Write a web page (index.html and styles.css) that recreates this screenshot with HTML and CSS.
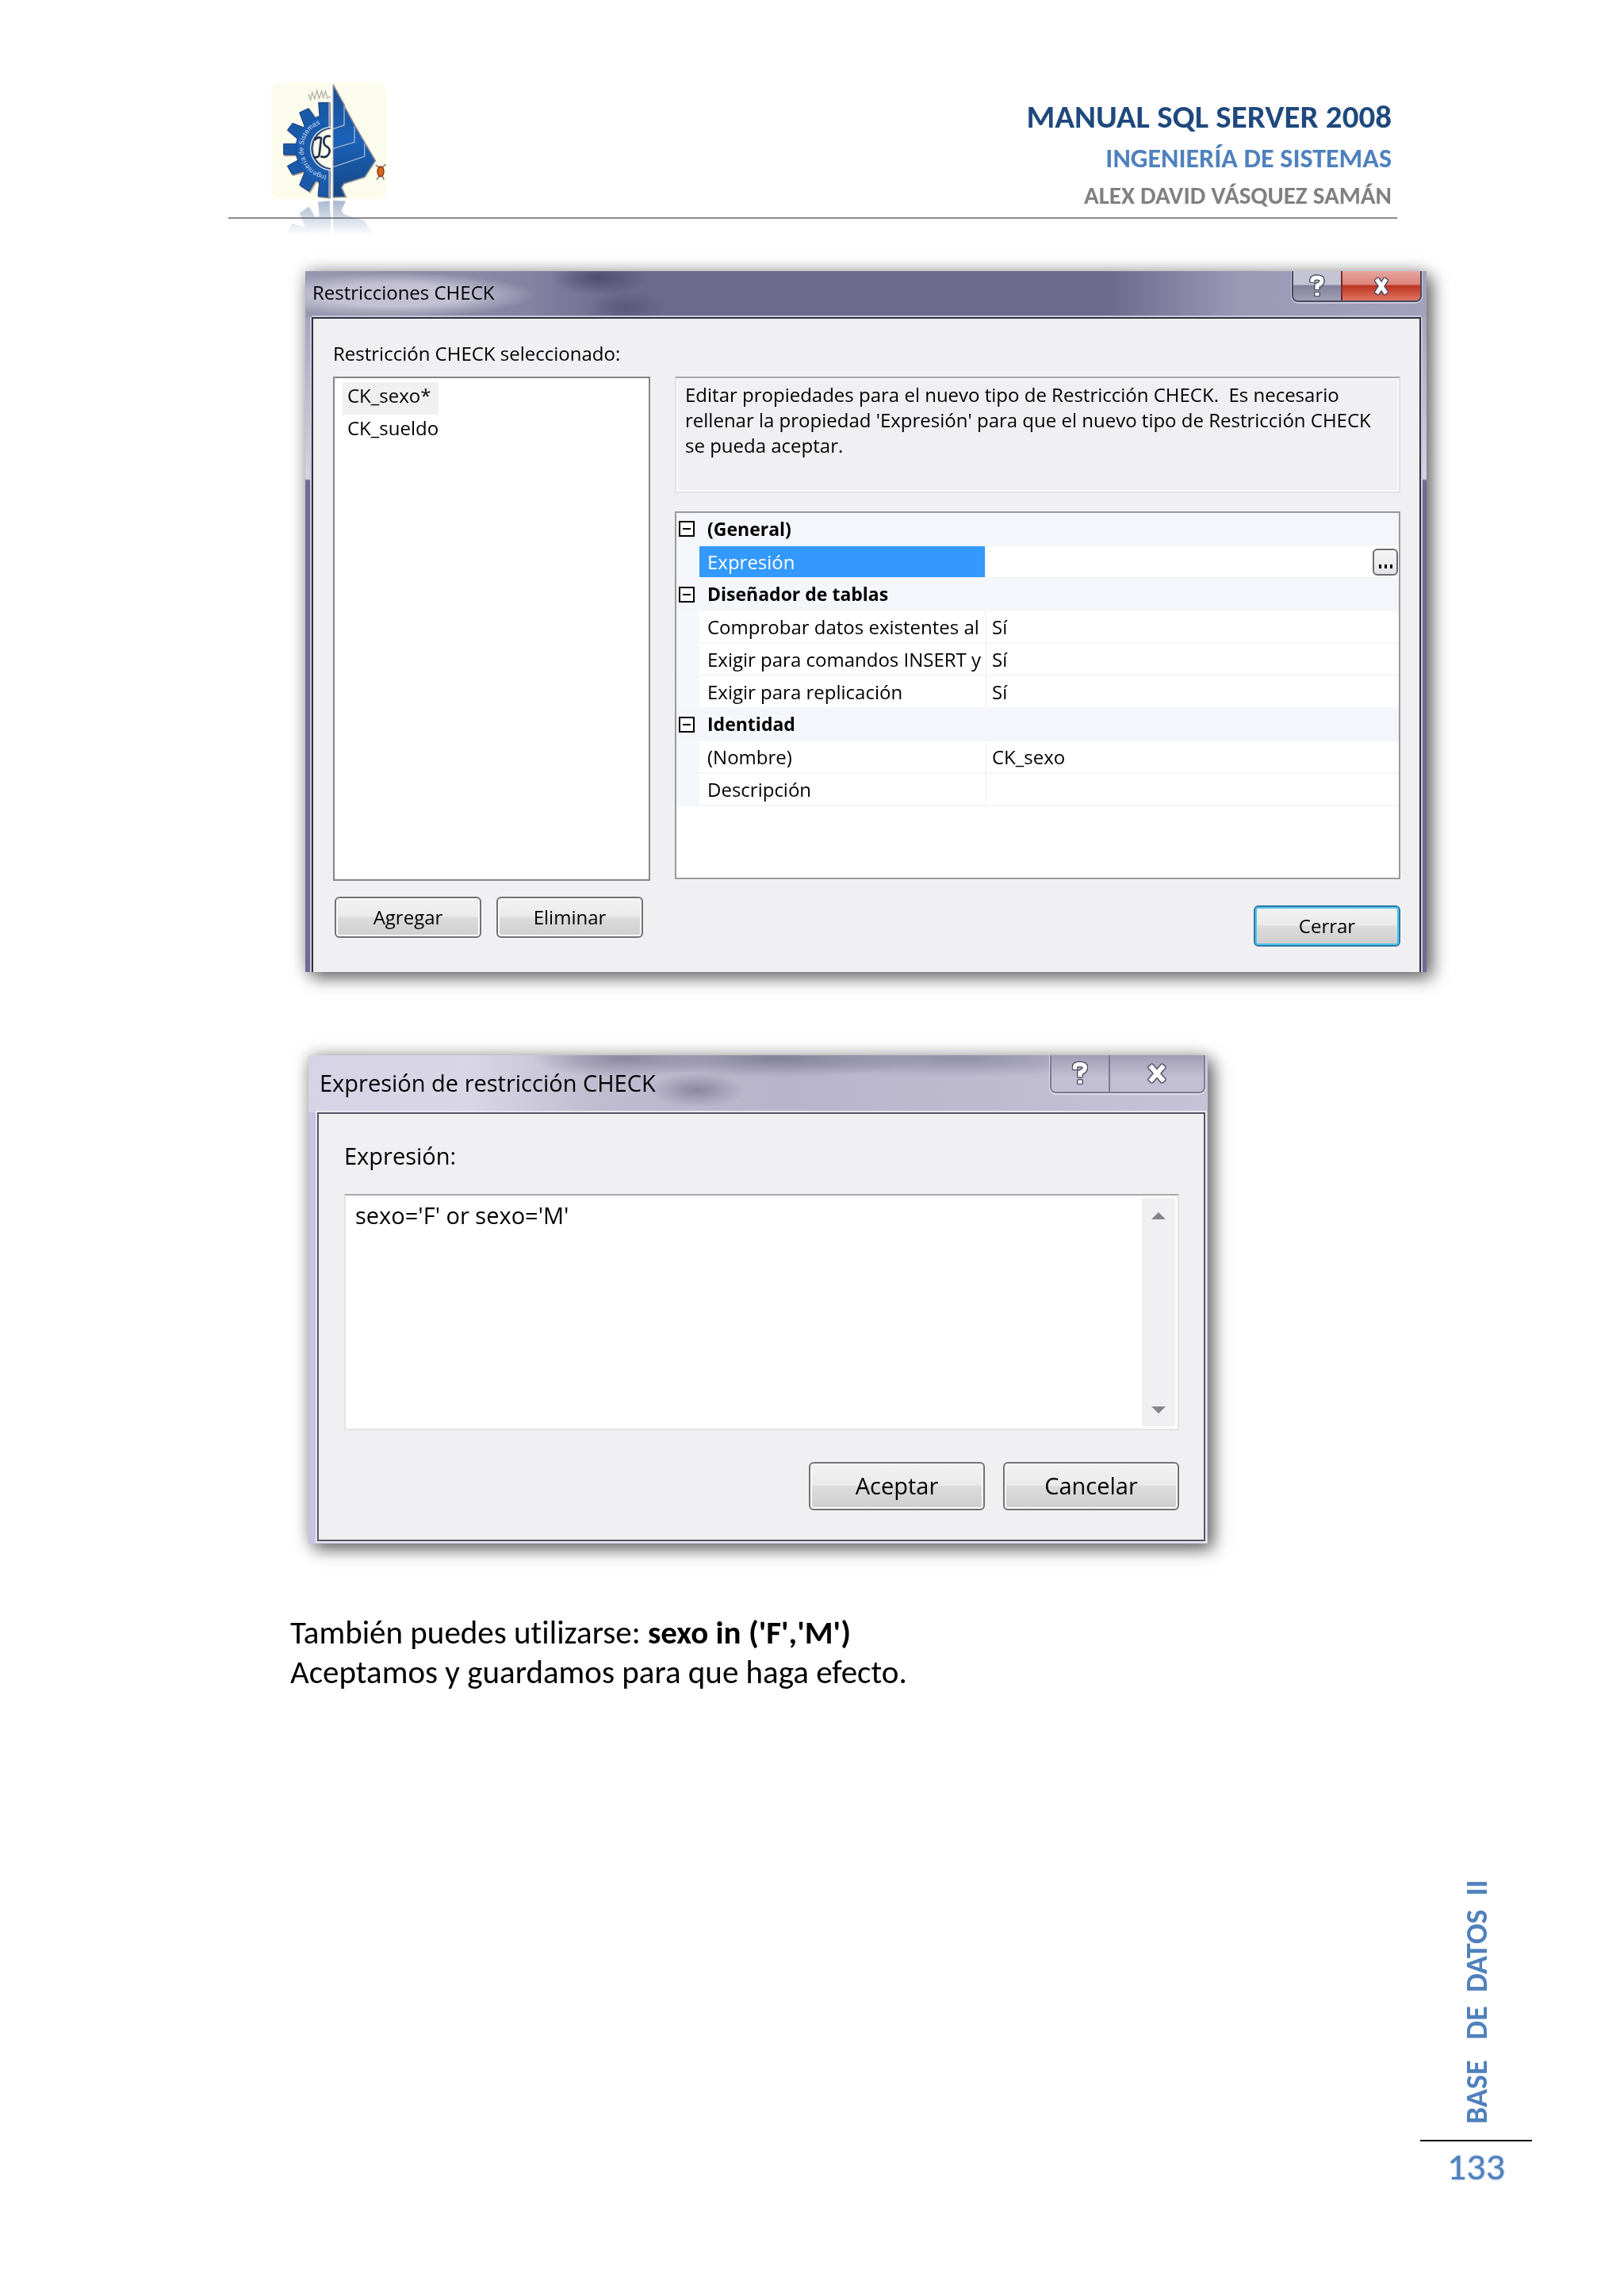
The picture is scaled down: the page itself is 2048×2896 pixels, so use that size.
FILE: index.html
```html
<!DOCTYPE html>
<html lang="es">
<head>
  <meta charset="UTF-8">
  <meta name="viewport" content="width=device-width, initial-scale=1.0">
  <title>Manual SQL Server 2008</title>
  <link rel="stylesheet" href="styles.css">
</head>
<body>
  <header>
    <svg class="logo" viewBox="180 69 450 588" role="img" aria-label="Ingeniería de Sistemas">
      <defs>
        <linearGradient id="azul" x1="0" y1="0" x2="0" y2="1">
          <stop offset="0" stop-color="#1a4f96"/>
          <stop offset="0.5" stop-color="#1a62b8"/>
          <stop offset="1" stop-color="#164684"/>
        </linearGradient>
        <linearGradient id="desvanecer" gradientUnits="userSpaceOnUse" x1="0" y1="515" x2="0" y2="650">
          <stop offset="0" stop-color="#fff" stop-opacity="0.5"/>
          <stop offset="0.5" stop-color="#fff" stop-opacity="0.25"/>
          <stop offset="1" stop-color="#fff" stop-opacity="0"/>
        </linearGradient>
        <mask id="mascara" maskUnits="userSpaceOnUse" x="180" y="515" width="450" height="142">
          <rect x="180" y="515" width="450" height="142" fill="url(#desvanecer)"/>
        </mask>
        <clipPath id="mitad"><rect x="180" y="69" width="228" height="450"/></clipPath>
        <path id="arco" d="M392 424 A102 102 0 0 1 392 222"/>
        <g id="engranaje">
          <circle cx="408" cy="324" r="132"/>
          <path d="M362 148 L405 148 L405 240 L366 200 Z M290 186 L324 170 L352 210 L310 240 Z M244 252 L264 226 L310 244 L284 286 Z M230 304 L278 304 L278 345 L230 345 Z M244 388 L284 366 L310 406 L262 420 Z M290 460 L310 410 L352 440 L326 484 Z M360 502 L366 440 L405 410 L405 506 Z"/>
        </g>
        <path id="vela" d="M417 80 L459 156 L462 166 L500 236 L538 302 L577 368 L537 430 L458 455 L449 470 L465 505 L417 507 Z"/>
      </defs>
      <rect x="183" y="73" width="436" height="440" rx="34" fill="#fbfcec"/>
      <g clip-path="url(#mitad)">
        <use href="#engranaje" fill="#8f8b8b" stroke="#a9a5a3" stroke-width="5" transform="translate(4 4)"/>
        <use href="#engranaje" fill="#1a59a8" stroke="#1c3f78" stroke-width="3"/>
        <circle cx="408" cy="324" r="131" fill="#1a5cae"/>
        <path d="M403 148 V506" stroke="#b9b5b3" stroke-width="6"/>
        <circle cx="414" cy="322" r="84" fill="#e9eef5"/>
        <circle cx="414" cy="322" r="80" fill="#24436f"/>
        <circle cx="416" cy="322" r="74" fill="#fbfcec" stroke="#c8cbd0" stroke-width="3"/>
      </g>
      <text class="logo-arco"><textPath href="#arco">Ingeniería de Sistemas</textPath></text>
      <path d="M348 290 q10 -14 24 -8 q-4 40 -8 68 q-8 8 -18 4 M408 276 q-26 -6 -26 20 q0 14 14 20 q14 10 4 28 q-10 16 -30 8" fill="none" stroke="#20304f" stroke-width="8"/>
      <path d="M324 116 l8 22 l6 -28 l10 24 l8 -32 l8 30 l10 -28 l6 26 l8 -24 l8 26 l12 -8" fill="none" stroke="#b3b2a8" stroke-width="4"/>
      <use href="#vela" fill="url(#azul)" stroke="#8d8b90" stroke-width="5"/>
      <path d="M459 160 V234 L417 248 M498 238 V298 L417 322 M536 304 V352 L417 392" fill="none" stroke="#a9b7ca" stroke-width="4"/>
      <path d="M412 76 V512" stroke="#fff" stroke-width="7"/>
      <path d="M578 384 l14 10 M616 382 l-12 12 M582 440 l12 -16 M610 440 l-8 -16" stroke="#6b6552" stroke-width="4"/>
      <ellipse cx="597" cy="409" rx="12" ry="19" fill="#d4691d" stroke="#8b2f14" stroke-width="4"/>
      <g mask="url(#mascara)">
        <g transform="translate(0 1026) scale(1 -1)" fill="#4c6899">
          <g clip-path="url(#mitad)"><use href="#engranaje"/></g>
          <use href="#vela"/>
        </g>
      </g>
    </svg>
    <div class="titulos">
      <h1>MANUAL SQL SERVER 2008</h1>
      <h2>INGENIERÍA DE SISTEMAS</h2>
      <p>ALEX DAVID VÁSQUEZ SAMÁN</p>
    </div>
  </header>

  <main>
    <section class="ventana restricciones">
      <div class="barra">
        <span>Restricciones CHECK</span>
        <div class="controles">
          <button class="ayuda" aria-label="Ayuda">
            <svg width="24" height="32" viewBox="0 0 24 32"><path d="M6 11 V8 Q6 5 12 5 Q18 5 18 9 Q18 13 12 15 V20 M12 24 V28"/></svg>
          </button>
          <button class="cerrar" aria-label="Cerrar ventana">
            <svg width="28" height="26" viewBox="0 0 28 26"><path d="M8 4 L20 22 M20 4 L8 22"/></svg>
          </button>
        </div>
      </div>
      <div class="cliente">
        <label for="lista">Restricción CHECK seleccionado:</label>
        <div class="columnas">
          <div class="izquierda">
            <select id="lista" size="2">
              <option class="actual">CK_sexo*</option>
              <option>CK_sueldo</option>
            </select>
            <div class="botones">
              <button class="boton">Agregar</button>
              <button class="boton">Eliminar</button>
            </div>
          </div>
          <div class="derecha">
            <p class="info">Editar propiedades para el nuevo tipo de Restricción CHECK.&nbsp; Es necesario rellenar la propiedad 'Expresión' para que el nuevo tipo de Restricción CHECK se pueda aceptar.</p>
            <div class="propiedades">
              <table>
                <colgroup><col class="col-margen"><col class="col-nombre"><col></colgroup>
                <tr class="categoria"><td><button class="plegar" aria-label="Contraer General"></button></td><th colspan="2">(General)</th></tr>
                <tr class="elegida"><td></td><td>Expresión</td><td><button class="puntos" aria-label="Editar expresión"><i></i><i></i><i></i></button></td></tr>
                <tr class="categoria"><td><button class="plegar" aria-label="Contraer Diseñador de tablas"></button></td><th colspan="2">Diseñador de tablas</th></tr>
                <tr><td></td><td>Comprobar datos existentes al</td><td>Sí</td></tr>
                <tr><td></td><td>Exigir para comandos INSERT y</td><td>Sí</td></tr>
                <tr><td></td><td>Exigir para replicación</td><td>Sí</td></tr>
                <tr class="categoria"><td><button class="plegar" aria-label="Contraer Identidad"></button></td><th colspan="2">Identidad</th></tr>
                <tr><td></td><td>(Nombre)</td><td>CK_sexo</td></tr>
                <tr><td></td><td>Descripción</td><td></td></tr>
              </table>
            </div>
            <button class="boton principal">Cerrar</button>
          </div>
        </div>
      </div>
    </section>

    <section class="ventana expresion">
      <div class="barra">
        <span>Expresión de restricción CHECK</span>
        <div class="controles">
          <button class="ayuda" aria-label="Ayuda">
            <svg width="26" height="34" viewBox="0 0 24 32"><path d="M6 11 V8 Q6 5 12 5 Q18 5 18 9 Q18 13 12 15 V20 M12 24 V28"/></svg>
          </button>
          <button class="cerrar" aria-label="Cerrar ventana">
            <svg width="34" height="32" viewBox="0 0 28 26"><path d="M7 5 L21 21 M21 5 L7 21"/></svg>
          </button>
        </div>
      </div>
      <div class="cliente">
        <label for="texto">Expresión:</label>
        <div class="caja">
          <textarea id="texto">sexo='F' or sexo='M'</textarea>
          <div class="desplazar">
            <svg width="18" height="9" viewBox="0 0 18 9"><path d="M0 9 L9 0 L18 9 Z"/></svg>
            <svg width="18" height="9" viewBox="0 0 18 9"><path d="M0 0 L9 9 L18 0 Z"/></svg>
          </div>
        </div>
        <div class="botones">
          <button class="boton">Aceptar</button>
          <button class="boton">Cancelar</button>
        </div>
      </div>
    </section>

    <p class="texto">También puedes utilizarse: <b>sexo in ('F','M')</b><br>Aceptamos y guardamos para que haga efecto.</p>
  </main>

  <footer>
    <span class="materia">BASE   DE  DATOS  II</span>
    <span class="pagina">133</span>
  </footer>
</body>
</html>
```
FILE: styles.css
```css
* {
  box-sizing: border-box;
  margin: 0;
}

body {
  display: flex;
  flex-direction: column;
  min-height: 100vh;
  background-color: white;
  color: black;
  font-family: Calibri, Carlito, Lato, sans-serif;
  font-size: 41px;
  font-variant-ligatures: none;
}

header {
  display: flex;
  justify-content: space-between;
  margin: 0 286px 0 288px;
  padding: 103px 7px 0 53px;
  border-bottom: 2px solid #8b8b90;
}

.logo {
  width: 150px;
  height: 196px;
  margin-bottom: -25px;
}
.logo-arco {
  font-family: "Liberation Sans", sans-serif;
  font-size: 26px;
  fill: #c9daf0;
}

.titulos {
  margin-top: 16px;
  text-align: right;
  font-weight: bold;
}
.titulos h1 {
  font-size: 41px;
  line-height: 56px;
  color: #1f497d;
}
.titulos h2 {
  font-size: 34px;
  line-height: 50px;
  color: #4f81bd;
}
.titulos p {
  font-size: 31px;
  line-height: 42px;
  color: #808080;
}

main {
  padding: 66px 248px 0 366px;
}

/* ventanas */
.ventana {
  font-family: "Open Sans", "Noto Sans", sans-serif;
  font-size: 24px;
  box-shadow: 8px 8px 20px rgba(0, 0, 0, .5), 0 0 20px rgba(0, 0, 0, .3);
}
.ventana button, .ventana select, .ventana textarea {
  font: inherit;
  color: inherit;
}
.barra {
  display: flex;
  justify-content: space-between;
  align-items: center;
}
.controles {
  display: flex;
  align-self: flex-start;
  border: 2px solid #4a4962;
  border-top: none;
  border-radius: 0 0 8px 8px;
  box-shadow: 0 1px 0 1px #c9c8da;
  overflow: hidden;
}
.controles button {
  display: flex;
  align-items: center;
  justify-content: center;
  padding: 0;
  border: none;
}
.controles path {
  fill: none;
  stroke: white;
  stroke-width: 5;
}
.controles svg {
  filter: drop-shadow(1px 0 0 #4b4a60) drop-shadow(-1px 0 0 #4b4a60) drop-shadow(0 1px 0 #4b4a60) drop-shadow(0 -1px 0 #4b4a60);
}
.cliente {
  background-color: #f0eff1;
  border: 2px solid #32313f;
}
.cliente label {
  display: block;
  line-height: 40px;
}
.botones {
  display: flex;
}
.boton {
  width: 185px;
  height: 52px;
  padding: 0 0 2px;
  border: 2px solid #737373;
  border-radius: 6px;
  box-shadow: inset 0 0 0 2px #fafafa;
  background: linear-gradient(#f2f2f2 0%, #eaeaeb 48%, #dcdcdd 50%, #cecece 100%);
}
.boton.principal {
  align-self: flex-end;
  margin-top: 33px;
  border-color: #3378a6;
  box-shadow: inset 0 0 0 2px #4cc6ea;
}

/* Restricciones CHECK */
.restricciones {
  max-width: 1414px;
  margin-left: 19px;
  padding: 0 7px 0 8px;
  background: linear-gradient(#9a99b6 0, #d4d3e2 262px, #6f6b93 264px);
}
.restricciones .barra {
  height: 58px;
  margin: 0 -7px 0 -8px;
  padding: 0 6px 5px 9px;
  background:
    radial-gradient(ellipse 60px 22px at 370px 8px, #4f4d70, transparent),
    radial-gradient(ellipse 50px 20px at 405px 46px, #5a587b, transparent),
    radial-gradient(ellipse 180px 28px at 110px 30px, #c3c1d2 50%, rgba(195, 193, 210, 0)),
    linear-gradient(90deg, #9997b0 0, #8583a2 280px, #6b6a8c 400px, #6b6a8c 1010px, #9a99b6 1180px, #a3a2bc 100%);
}
.restricciones .ayuda {
  width: 60px;
  height: 37px;
  background: linear-gradient(#c5c4d2 45%, #84839b 50%, #a09fb6 100%);
}
.restricciones .cerrar {
  width: 100px;
  height: 37px;
  border-left: 2px solid #7b2a2c;
  background: linear-gradient(#e7a59f 0%, #dd8378 45%, #bd3421 50%, #df7561 100%);
}
.restricciones .cliente {
  padding: 24px 24px 32px 25px;
  border-bottom: none;
  box-shadow: 0 -2px 0 #c9c8da, 2px 0 0 #c9c8da, -2px 0 0 #c9c8da;
}
.columnas {
  display: grid;
  grid-template-columns: 400px 1fr;
  gap: 31px;
  margin-top: 9px;
}
.izquierda, .derecha {
  display: flex;
  flex-direction: column;
}
#lista {
  width: 100%;
  height: 636px;
  padding: 5px 10px;
  border: 2px solid #85858a;
  border-radius: 0;
  background-color: white;
  outline: none;
}
#lista option {
  width: max-content;
  padding: 0 6px;
  min-height: 41px;
  line-height: 41px;
}
#lista .actual {
  padding-right: 10px;
  background-color: #f0f0f1;
}
.izquierda .botones {
  gap: 19px;
  margin: 20px 0 0 2px;
}
.info {
  height: 147px;
  padding: 5px 11px;
  line-height: 32px;
  border: 2px solid #e3e3e6;
  border-top-color: #a5a5a8;
  box-shadow: inset 0 0 0 2px #fafafa;
}
.propiedades {
  height: 464px;
  margin-top: 23px;
  border: 2px solid #9a9a9e;
  background-color: white;
}
table {
  width: 100%;
  table-layout: fixed;
  border-collapse: collapse;
}
.col-margen {
  width: 29px;
}
.col-nombre {
  width: 361px;
}
tr {
  height: 41px;
}
td, th {
  height: 41px;
  padding: 0 0 0 10px;
  border-bottom: 2px solid #f6f6f9;
  line-height: 39px;
  text-align: left;
  white-space: nowrap;
  overflow: hidden;
}
td:first-child {
  padding: 0 0 0 3px;
  background-color: #f4f7fc;
}
td:nth-child(3) {
  padding: 0 1px 0 7px;
  border-left: 2px solid #f6f6f9;
}
th {
  font-size: 23px;
}
.categoria th, .categoria td {
  background-color: #f4f6fb;
}
.elegida td:nth-child(2) {
  background-color: #3399ff;
  color: white;
}
.plegar {
  display: block;
  width: 20px;
  height: 20px;
  padding: 0 3px;
  border: 2px solid black;
  background: linear-gradient(black, black) center / 10px 2px no-repeat white;
}
.puntos {
  display: flex;
  justify-content: center;
  align-items: flex-end;
  gap: 4px;
  width: 32px;
  height: 34px;
  margin-left: auto;
  padding: 0 0 7px;
  border: 2px solid #6d6d70;
  border-radius: 6px;
  background: linear-gradient(#f6f6f6, #e4e4e6);
}
.puntos i {
  width: 3px;
  height: 5px;
  background-color: black;
}

/* Expresión de restricción CHECK */
.expresion {
  max-width: 1134px;
  margin: 105px 0 0 23px;
  padding: 0 3px 3px 11px;
  background-color: #c8c4df;
  font-size: 29px;
}
.expresion .barra {
  height: 72px;
  margin: 0 -3px 0 -11px;
  padding: 0 3px 4px 14px;
  background:
    radial-gradient(ellipse 60px 22px at 490px 44px, #8a87a0, transparent),
    radial-gradient(ellipse 120px 24px at 400px 4px, #8a87a0, transparent),
    radial-gradient(ellipse 190px 24px at 590px 4px, #827f99, transparent),
    radial-gradient(ellipse 230px 24px at 820px 4px, #918ea8, transparent),
    linear-gradient(90deg, #d6d3e6 0, #d9d7e5 200px, #c0bdd1 360px, #b7b4cb 600px, #c6c3d8 100%);
}
.expresion .controles {
  border-color: #7d7b93;
  box-shadow: 0 1px 0 1px #dddbe8;
}
.expresion .controles button {
  height: 46px;
  background: linear-gradient(#a09db5, #c2bfd4 60%);
}
.expresion .ayuda {
  width: 72px;
}
.expresion .cerrar {
  width: 120px;
  border-left: 2px solid #7d7b93;
}
.expresion .cliente {
  padding: 33px 31px 37px 32px;
  border-color: #55545f;
  box-shadow: 0 0 0 2px #e9e8f2;
}
.caja {
  display: flex;
  height: 298px;
  margin-top: 28px;
  padding: 3px;
  border: 2px solid #e3e3e6;
  border-top-color: #a9a9ae;
  background-color: white;
}
.caja textarea {
  flex-grow: 1;
  padding: 2px 9px;
  border: none;
  outline: none;
  resize: none;
  line-height: 40px;
  background-color: white;
}
.desplazar {
  display: flex;
  flex-direction: column;
  justify-content: space-between;
  align-items: center;
  width: 42px;
  padding: 18px 0 16px;
  background-color: #f0eff1;
}
.desplazar path {
  fill: #858588;
}
.expresion .botones {
  justify-content: flex-end;
  gap: 23px;
  margin-top: 40px;
}
.expresion .boton {
  width: 222px;
  height: 61px;
}

.texto {
  margin-top: 87px;
  line-height: 50px;
}

footer {
  display: flex;
  flex-direction: column;
  align-items: center;
  align-self: flex-end;
  width: 141px;
  margin: auto 116px 0 0;
  padding-bottom: 129px;
  color: #4f81bd;
}
.materia {
  padding-top: 20px;
  font-size: 38px;
  font-weight: bold;
  line-height: 50px;
  white-space: pre;
  writing-mode: vertical-rl;
  transform: rotate(180deg);
}
.pagina {
  width: 100%;
  padding: 2px 0 4px;
  border-top: 2px solid black;
  font-size: 48px;
  line-height: 60px;
  text-align: center;
  text-shadow: 0 0 3px #8fb0dc;
}
```
